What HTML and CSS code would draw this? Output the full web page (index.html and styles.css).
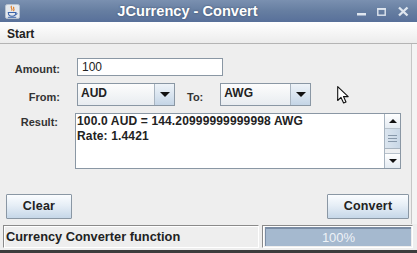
FILE: index.html
```html
<!DOCTYPE html>
<html lang="en">
<head>
  <meta charset="UTF-8" />
  <meta name="viewport" content="width=device-width, initial-scale=1.0"/>
  <title>JCurrency - Convert</title>
  <link rel="stylesheet" href="styles.css">
</head>
<body>

  <div class="window">
    <div class="titlebar">
      <svg class="app-icon" viewBox="0 0 16 16">
        <rect x="0.5" y="0.5" width="15" height="15" rx="2" fill="#e4e8ee" stroke="#b8c2cf"/>
        <path d="M7 2 C5 4, 9 5, 7 7 M9.5 3 C8 5, 11 5.5, 9 7.5" fill="none" stroke="#e07a1f" stroke-width="1.2"/>
        <path d="M3.5 9 H11.5 C11.5 12, 10 13, 7.5 13 C5 13, 3.5 12, 3.5 9 Z" fill="none" stroke="#3a62a8" stroke-width="1.1"/>
        <path d="M11.5 9.5 C13.5 9.5, 13.5 11.5, 11 11.5" fill="none" stroke="#3a62a8" stroke-width="1"/>
        <path d="M3 14.2 H12" stroke="#3a62a8" stroke-width="1"/>
      </svg>
      <span class="title">JCurrency - Convert</span>
      <div class="win-buttons">
        <svg viewBox="0 0 12 12"><rect x="2" y="8" width="9" height="2.5" fill="#dfe6ef"/></svg>
        <svg viewBox="0 0 12 12"><rect x="1.8" y="3.8" width="7.4" height="6.4" fill="none" stroke="#dfe6ef" stroke-width="1.4"/><rect x="1.2" y="3" width="8.6" height="1.8" fill="#dfe6ef"/></svg>
        <svg viewBox="0 0 12 12"><path d="M2 2.5 L10.5 10.5 M10.5 2.5 L2 10.5" stroke="#dfe6ef" stroke-width="2.4"/></svg>
      </div>
    </div>

    <div class="menubar"><span class="menu">Start</span></div>

    <div class="content">
      <div class="row amount-row">
        <label class="lbl">Amount:</label>
        <input class="field" type="text" value="100">
      </div>

      <div class="row combo-row">
        <label class="lbl">From:</label>
        <div class="combo combo-from">
          <span class="combo-text">AUD</span>
          <span class="combo-arrow"><span class="tri-down"></span></span>
        </div>
        <label class="to-lbl">To:</label>
        <div class="combo combo-to">
          <span class="combo-text">AWG</span>
          <span class="combo-arrow"><span class="tri-down"></span></span>
        </div>
      </div>

      <div class="row result-row">
        <label class="lbl result-lbl">Result:</label>
        <div class="textarea">
          <div class="result-text">100.0 AUD = 144.20999999999998 AWG<br>Rate: 1.4421</div>
          <div class="scrollbar">
            <div class="scroll-btn"><span class="tri-up"></span></div>
            <div class="scroll-thumb"><span></span><span></span><span></span></div>
            <div class="scroll-track"></div>
            <div class="scroll-btn"><span class="tri-down small"></span></div>
          </div>
        </div>
      </div>

      <div class="buttons">
        <button class="btn btn-clear">Clear</button>
        <button class="btn btn-convert">Convert</button>
      </div>
    </div>

    <div class="statusbar">
      <div class="status-text">Currency Converter function</div>
      <div class="status-progress">
        <div class="progress-fill">100%</div>
      </div>
    </div>
  </div>

  <svg class="cursor" viewBox="0 0 13 18">
    <path d="M0.7 0.7 L0.7 14.5 L4 11.4 L6.6 17 L9 15.9 L6.5 10.6 L11.2 10.6 Z" fill="#fff" stroke="#111" stroke-width="1.1" stroke-linejoin="round"/>
  </svg>

</body>
</html>
```

FILE: styles.css
```css
body {
  margin: 0;
  width: 417px;
  height: 253px;
  overflow: hidden;
  font-family: "Liberation Sans", Arial, sans-serif;
  background: #f4f4f4;
}

.window {
  width: 417px;
  height: 253px;
  display: flex;
  flex-direction: column;
  background: #f4f4f4;
}

/* title bar */
.titlebar {
  height: 22px;
  display: flex;
  align-items: center;
  background: linear-gradient(#7a90b0, #667ea1 50%, #58709a);
  color: #fff;
}

.app-icon {
  width: 15px;
  height: 15px;
  margin-left: 5px;
}

.title {
  flex: 1;
  text-align: center;
  font-size: 14.6px;
  font-weight: bold;
  text-shadow: 0 0 2px rgba(40, 55, 80, 0.7);
}

.win-buttons {
  display: flex;
  gap: 9px;
  padding-right: 8px;
}

.win-buttons svg {
  width: 12px;
  height: 12px;
}

/* menu */
.menubar {
  height: 21px;
  line-height: 21px;
  background: linear-gradient(#ffffff, #ececec);
  border-bottom: 1px solid #b4b4b4;
}

.menu {
  padding-left: 7px;
  font-size: 12px;
  font-weight: bold;
  color: #222;
}

/* form */
.content {
  flex: 1;
  width: 413px;
  background: #eeeeee;
  border-right: 1px solid #c6c6c6;
  border-left: 1px solid #b0b0b0;
  padding-top: 14px;
  margin-left: -1px;
  padding-left: 1px;
  box-sizing: border-box;
}

.row {
  display: flex;
  align-items: center;
}

.lbl {
  width: 59px;
  text-align: right;
  font-size: 11px;
  font-weight: bold;
  color: #333;
}

.amount-row {
  height: 18px;
}

.amount-row .lbl {
  padding-top: 3px;
}

.field {
  margin: 0 0 0 17px;
  width: 146px;
  height: 18px;
  box-sizing: border-box;
  border: 1px solid #8a97a4;
  background: #fff;
  padding: 0 0 0 4px;
  font-family: "Liberation Sans", Arial, sans-serif;
  font-size: 12px;
  color: #222;
  outline: none;
}

.combo-row {
  height: 23px;
  margin-top: 7px;
}

.combo-row .lbl,
.to-lbl {
  padding-top: 5px;
}

.to-lbl {
  margin-left: 12px;
  font-size: 11px;
  font-weight: bold;
  color: #333;
}

.combo {
  height: 23px;
  box-sizing: border-box;
  border: 1px solid #8a97a4;
  background: linear-gradient(#fdfdfd, #e8ecf0);
  display: flex;
}

.combo-from {
  margin-left: 17px;
  width: 98px;
}

.combo-to {
  margin-left: 17px;
  width: 91px;
}

.combo-text {
  flex: 1;
  padding: 0 0 3px 3px;
  display: flex;
  align-items: center;
  font-size: 12px;
  font-weight: bold;
  color: #222;
}

.combo-arrow {
  width: 19px;
  border-left: 1px solid #a8b4c0;
  background: linear-gradient(#eef3f8, #d6e2ee 60%, #c4d5e6);
  display: flex;
  align-items: center;
  justify-content: center;
}

.tri-down {
  width: 0;
  height: 0;
  border-left: 5px solid transparent;
  border-right: 5px solid transparent;
  border-top: 5px solid #111;
}

.tri-down.small {
  border-left-width: 4px;
  border-right-width: 4px;
  border-top-width: 4px;
}

.tri-up {
  width: 0;
  height: 0;
  border-left: 4px solid transparent;
  border-right: 4px solid transparent;
  border-bottom: 4px solid #111;
}

.result-row {
  align-items: flex-start;
  margin-top: 7px;
}

.result-lbl {
  width: 57px;
  padding-top: 2px;
  line-height: 14px;
}

.textarea {
  margin-left: 17px;
  width: 326px;
  height: 56px;
  box-sizing: border-box;
  border: 1px solid #8a97a4;
  background: #fff;
  display: flex;
}

.result-text {
  flex: 1;
  padding-left: 1px;
  font-size: 12px;
  font-weight: bold;
  line-height: 15px;
  letter-spacing: 0.15px;
  color: #222;
}

.scrollbar {
  width: 15px;
  display: flex;
  flex-direction: column;
  border-left: 1px solid #a8b4c0;
  background: #eef0f2;
}

.scroll-btn {
  height: 15px;
  display: flex;
  align-items: center;
  justify-content: center;
  background: linear-gradient(#ffffff, #e4ebf2);
  border-bottom: 1px solid #b8c2cc;
  box-sizing: border-box;
}

.scroll-btn:last-child {
  border-bottom: none;
  border-top: 1px solid #b8c2cc;
}

.scroll-thumb {
  height: 20px;
  box-sizing: border-box;
  border-bottom: 1px solid #a8b4c0;
  background: linear-gradient(90deg, #dbe5ef, #c8d7e6);
  display: flex;
  flex-direction: column;
  justify-content: center;
  align-items: center;
  gap: 2px;
}

.scroll-thumb span {
  width: 9px;
  height: 1px;
  background: #8798aa;
}

.scroll-track {
  flex: 1;
}

.buttons {
  display: flex;
  justify-content: space-between;
  margin-top: 25px;
  padding: 0 2px 0 5px;
}

.btn {
  height: 25px;
  border: 1px solid #8a97a4;
  border-radius: 1px;
  background: linear-gradient(#fbfdff, #e6eef6 45%, #c6d7e8);
  font-family: "Liberation Sans", Arial, sans-serif;
  font-size: 12.5px;
  font-weight: bold;
  letter-spacing: 0.2px;
  color: #222;
  padding: 0 0 2px;
  cursor: pointer;
}

.btn-clear {
  width: 66px;
}

.btn-convert {
  width: 82px;
}

/* status bar */
.statusbar {
  display: flex;
  gap: 3px;
  padding: 1px 4px 2px 3px;
  box-sizing: border-box;
  background: #eeeeee;
  border-bottom: 3px solid #3c3c3c;
  height: 29px;
}

.status-text {
  width: 256px;
  box-sizing: border-box;
  border: 1px solid;
  border-color: #8a8a8a #ffffff #ffffff #8a8a8a;
  box-shadow: inset 1px 1px 0 #ffffff;
  padding-left: 2px;
  font-size: 12.8px;
  font-weight: bold;
  line-height: 21px;
  color: #222;
  white-space: nowrap;
}

.status-progress {
  flex: 1;
  box-sizing: border-box;
  border: 1px solid;
  border-color: #8a8a8a #ffffff #ffffff #8a8a8a;
  box-shadow: inset 1px 1px 0 #ffffff;
  padding: 1px 1px 1px 2px;
  display: flex;
}

.progress-fill {
  flex: 1;
  background: #a5b9cf;
  border-top: 2px solid #7a8ca4;
  border-left: 1px solid #7a8ca4;
  text-align: center;
  font-size: 13px;
  line-height: 17px;
  color: #eef2f7;
}

.cursor {
  position: absolute;
  left: 337px;
  top: 86px;
  width: 13px;
  height: 18px;
}
```
